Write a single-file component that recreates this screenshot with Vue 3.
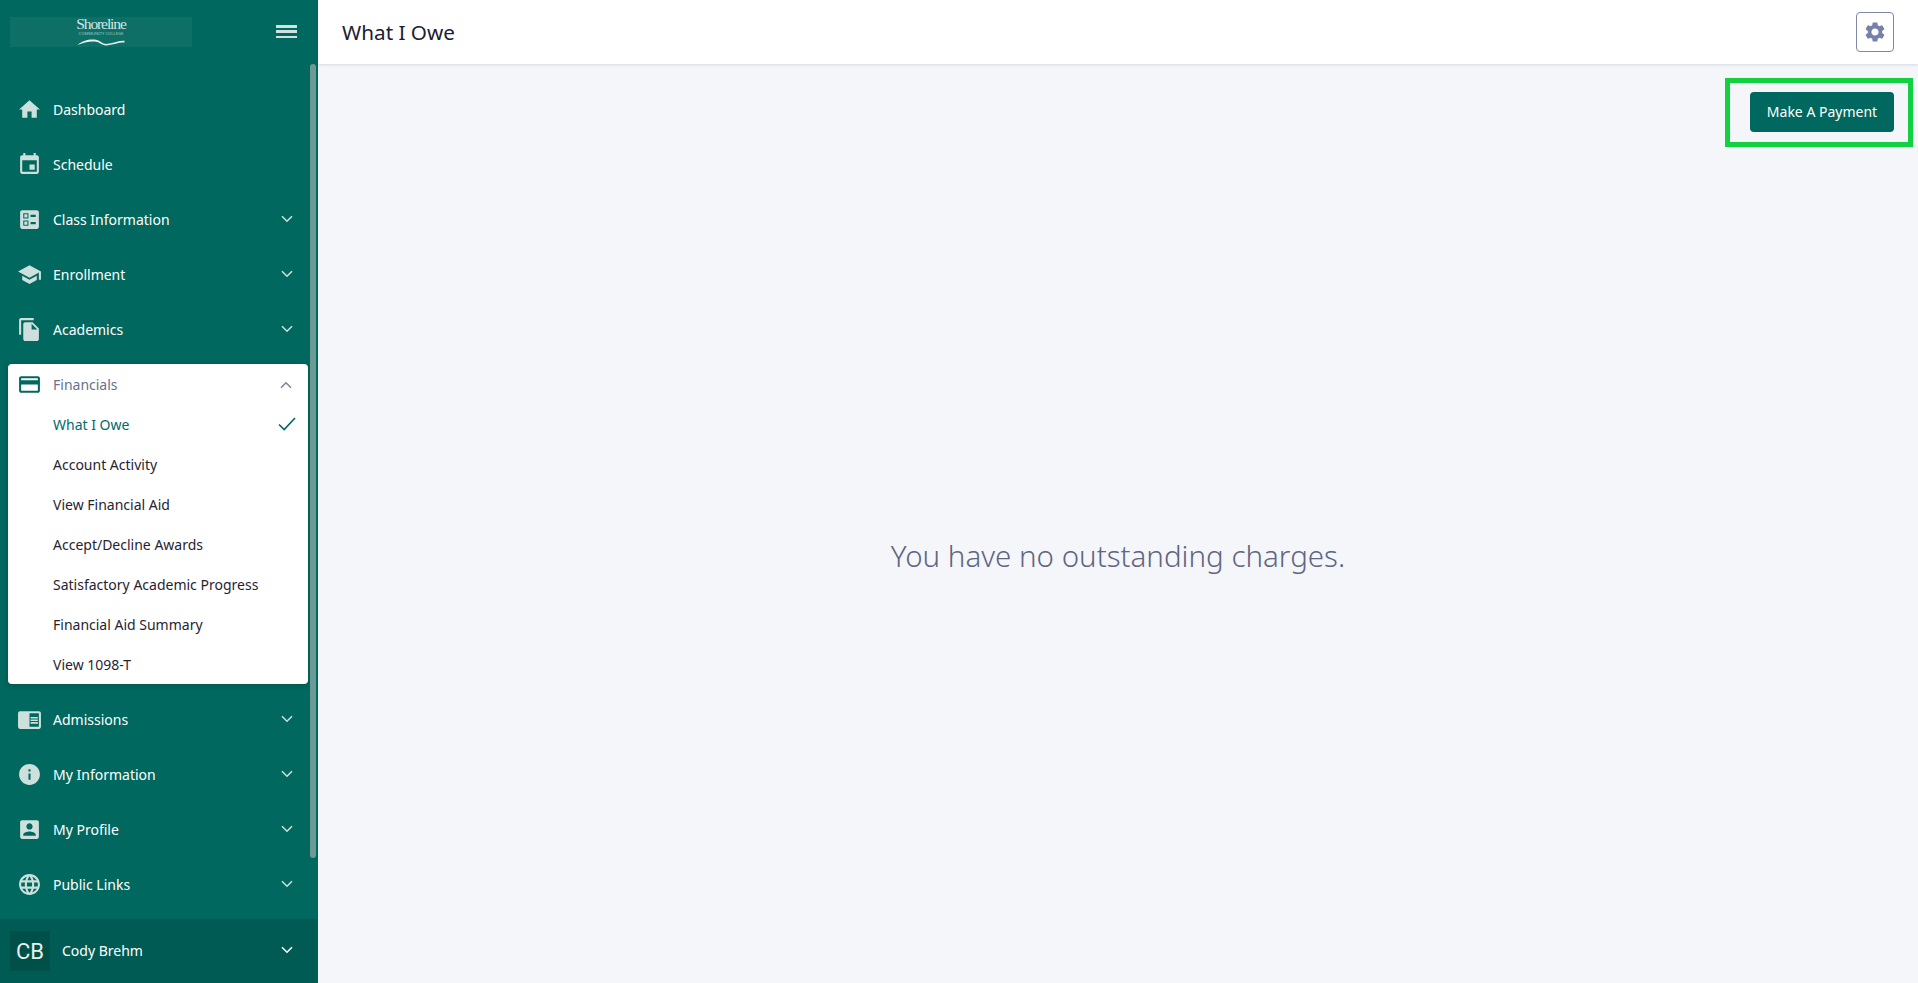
<script setup>
const icons = {
  home: 'M10 20v-6h4v6h5v-8h3L12 3 2 12h3v8z',
  event: 'M17 12h-5v5h5v-5zM16 1v2H8V1H6v2H5c-1.11 0-1.99.9-1.99 2L3 19c0 1.1.89 2 2 2h14c1.1 0 2-.9 2-2V5c0-1.1-.9-2-2-2h-1V1h-2zm3 18H5V8h14v11z',
  ballot: 'M13 9.5h5v-2h-5v2zm0 7h5v-2h-5v2zm6 4.5H5c-1.1 0-2-.9-2-2V5c0-1.1.9-2 2-2h14c1.1 0 2 .9 2 2v14c0 1.1-.9 2-2 2zM6 11h5V6H6v5zm1-4h3v3H7V7zM6 18h5v-5H6v5zm1-4h3v3H7v-3z',
  school: 'M5 13.18v4L12 21l7-3.82v-4L12 17l-7-3.82zM12 3L1 9l11 6 9-4.91V17h2V9L12 3z',
  file: 'M16 1H4c-1.1 0-2 .9-2 2v14h2V3h12V1zm-1 4l6 6v10c0 1.1-.9 2-2 2H7.99C6.89 23 6 22.1 6 21l.01-14c0-1.1.89-2 1.99-2h7zm-1 7h5.5L14 6.5V12z',
  card: 'M20 4H4c-1.11 0-1.99.89-1.99 2L2 18c0 1.11.89 2 2 2h16c1.11 0 2-.89 2-2V6c0-1.11-.89-2-2-2zm0 14H4v-6h16v6zm0-10H4V6h16v2z',
  reader: 'M13 12h7v1.5h-7zm0-2.5h7V11h-7zm0 5h7V16h-7zM21 4H3c-1.1 0-2 .9-2 2v13c0 1.1.9 2 2 2h18c1.1 0 2-.9 2-2V6c0-1.1-.9-2-2-2zm0 15h-9V6h9v13z',
  info: 'M12 2C6.48 2 2 6.48 2 12s4.48 10 10 10 10-4.48 10-10S17.52 2 12 2zm1 15h-2v-6h2v6zm0-8h-2V7h2v2z',
  profile: 'M3 5v14c0 1.1.89 2 2 2h14c1.1 0 2-.9 2-2V5c0-1.1-.9-2-2-2H5c-1.11 0-2 .9-2 2zm12 4c0 1.66-1.34 3-3 3s-3-1.34-3-3 1.34-3 3-3 3 1.34 3 3zm-9 8c0-2 4-3.1 6-3.1s6 1.1 6 3.1v1H6v-1z',
  globe: 'M11.99 2C6.47 2 2 6.48 2 12s4.47 10 9.99 10C17.52 22 22 17.52 22 12S17.52 2 11.99 2zm6.93 6h-2.95c-.32-1.25-.78-2.45-1.38-3.56 1.84.63 3.37 1.91 4.33 3.56zM12 4.04c.83 1.2 1.48 2.53 1.91 3.96h-3.82c.43-1.43 1.08-2.76 1.91-3.96zM4.26 14C4.1 13.36 4 12.69 4 12s.1-1.36.26-2h3.38c-.08.66-.14 1.32-.14 2 0 .68.06 1.34.14 2H4.26zm.82 2h2.95c.32 1.25.78 2.45 1.38 3.56-1.84-.63-3.37-1.9-4.33-3.56zm2.95-8H5.08c.96-1.66 2.49-2.93 4.33-3.56C8.81 5.55 8.35 6.75 8.03 8zM12 19.96c-.83-1.2-1.48-2.53-1.91-3.96h3.82c-.43 1.43-1.08 2.76-1.91 3.96zM14.34 14H9.66c-.09-.66-.16-1.32-.16-2 0-.68.07-1.35.16-2h4.68c.09.65.16 1.32.16 2 0 .68-.07 1.34-.16 2zm.25 5.56c.6-1.11 1.06-2.31 1.38-3.56h2.95c-.96 1.65-2.49 2.93-4.33 3.56zM16.36 14c.08-.66.14-1.32.14-2 0-.68-.06-1.34-.14-2h3.38c.16.64.26 1.31.26 2s-.1 1.36-.26 2h-3.38z',
  gear: 'M19.14 12.94c.04-.3.06-.61.06-.94 0-.32-.02-.64-.07-.94l2.03-1.58c.18-.14.23-.41.12-.61l-1.92-3.32c-.12-.22-.37-.29-.59-.22l-2.39.96c-.5-.38-1.03-.7-1.62-.94l-.36-2.54c-.04-.24-.24-.41-.48-.41h-3.84c-.24 0-.43.17-.47.41l-.36 2.54c-.59.24-1.13.57-1.62.94l-2.39-.96c-.22-.08-.47 0-.59.22L2.74 8.87c-.12.21-.08.47.12.61l2.03 1.58c-.05.3-.09.63-.09.94s.02.64.07.94l-2.03 1.58c-.18.14-.23.41-.12.61l1.92 3.32c.12.22.37.29.59.22l2.39-.96c.5.38 1.03.7 1.62.94l.36 2.54c.05.24.24.41.48.41h3.84c.24 0 .44-.17.47-.41l.36-2.54c.59-.24 1.13-.56 1.62-.94l2.39.96c.22.08.47 0 .59-.22l1.92-3.32c.12-.22.07-.47-.12-.61l-2.01-1.58zM12 15.6c-1.98 0-3.6-1.62-3.6-3.6s1.62-3.6 3.6-3.6 3.6 1.62 3.6 3.6-1.62 3.6-3.6 3.6z'
}
const topItems = [
  { label: 'Dashboard', icon: 'home' },
  { label: 'Schedule', icon: 'event' },
  { label: 'Class Information', icon: 'ballot', more: true },
  { label: 'Enrollment', icon: 'school', more: true },
  { label: 'Academics', icon: 'file', more: true }
]
const subItems = ['Account Activity', 'View Financial Aid', 'Accept/Decline Awards', 'Satisfactory Academic Progress', 'Financial Aid Summary', 'View 1098-T']
const bottomItems = [
  { label: 'Admissions', icon: 'reader', more: true },
  { label: 'My Information', icon: 'info', more: true },
  { label: 'My Profile', icon: 'profile', more: true },
  { label: 'Public Links', icon: 'globe', more: true }
]
</script>

<template>
  <div class="app">
    <aside class="sidebar">
      <div class="brand">
        <div class="logo">
          <span class="logo-name">Shoreline</span>
          <span class="logo-sub">COMMUNITY COLLEGE</span>
          <svg class="logo-wave" viewBox="0 0 48 9"><path d="M0.500 8C5 3.500 14 1.500 20 3C25 4.500 25 7.500 31 6.800C37 6 42 3.500 47.500 3.800V5.500C42 5 37 7.500 31 8.300C24 9 24 5.500 19 4.800C13 4 6 6 0.500 8Z" /></svg>
        </div>
        <button class="burger" aria-label="Menu"><i></i><i></i><i></i></button>
      </div>

      <nav class="nav">
        <a v-for="item in topItems" :key="item.label" class="row">
          <svg class="icon" viewBox="0 0 24 24"><path :d="icons[item.icon]" /></svg>
          <span class="label">{{ item.label }}</span>
          <svg v-if="item.more" class="chev" viewBox="0 0 12 8"><path d="M1 1.200 6 6.200 11 1.200" /></svg>
        </a>

        <section class="open">
          <div class="open-head">
            <svg class="icon" viewBox="0 0 24 24"><path :d="icons.card" /></svg>
            <span class="label">Financials</span>
            <svg class="chev" viewBox="0 0 12 8"><path d="M1 6.800 6 1.800 11 6.800" /></svg>
          </div>
          <a class="sub current">
            <span>What I Owe</span>
            <svg class="check" viewBox="0 0 18 14"><path d="M1 7.500 6.200 12.500 17 1" /></svg>
          </a>
          <a v-for="s in subItems" :key="s" class="sub">{{ s }}</a>
        </section>

        <a v-for="item in bottomItems" :key="item.label" class="row">
          <svg class="icon" viewBox="0 0 24 24"><path :d="icons[item.icon]" /></svg>
          <span class="label">{{ item.label }}</span>
          <svg class="chev" viewBox="0 0 12 8"><path d="M1 1.200 6 6.200 11 1.200" /></svg>
        </a>
      </nav>

      <div class="user">
        <div class="avatar">CB</div>
        <span class="user-name">Cody Brehm</span>
        <svg class="chev user-chev" viewBox="0 0 12 8"><path d="M1 1.200 6 6.200 11 1.200" /></svg>
      </div>
      <div class="thumb"></div>
    </aside>

    <main class="main">
      <header class="header">
        <h1>What I Owe</h1>
        <button class="gear" aria-label="Settings">
          <svg viewBox="0 0 24 24"><path :d="icons.gear" /></svg>
        </button>
      </header>
      <div class="content">
        <div class="actions">
          <div class="highlight"><button class="pay">Make A Payment</button></div>
        </div>
        <p class="empty">You have no outstanding charges.</p>
      </div>
    </main>
  </div>
</template>

<style>
html, body { margin: 0; overflow: hidden; }
</style>

<style scoped>
.app {
  display: flex;
  width: 1918px;
  height: 983px;
  overflow: hidden;
  font-family: "Noto Sans", "Liberation Sans", sans-serif;
  font-size: 14px;
  background: #f4f6fa;
}
.sidebar {
  position: relative;
  flex: 0 0 318px;
  display: flex;
  flex-direction: column;
  background: #00685e;
  color: #fff;
}
.brand {
  height: 64px;
  flex: none;
  box-sizing: border-box;
  display: flex;
  align-items: flex-start;
  padding: 17px 0 0 10px;
}
.logo {
  width: 182px;
  height: 30px;
  background: rgba(255, 255, 255, 0.05);
  display: flex;
  flex-direction: column;
  align-items: center;
  color: #d5e6e2;
}
.logo-name {
  font-family: "Liberation Serif", serif;
  font-size: 15.500px;
  line-height: 13px;
  letter-spacing: -1.100px;
}
.logo-sub {
  font-size: 4.200px;
  line-height: 4px;
  margin-top: 2px;
  white-space: nowrap;
  opacity: 0.7;
}
.logo-wave {
  width: 48px;
  height: 9px;
  margin-top: 1px;
  flex: none;
  fill: #e6f0ee;
}
.burger {
  margin: 8px 0 0 84px;
  padding: 0;
  width: 21px;
  height: 13px;
  background: none;
  border: 0;
  display: flex;
  flex-direction: column;
  justify-content: space-between;
}
.burger i {
  display: block;
  height: 2.500px;
  background: #cfe2de;
}
.nav {
  flex: 1;
  padding-top: 17.500px;
  min-height: 0;
}
.row {
  height: 55px;
  display: flex;
  align-items: center;
  padding: 0 25px 0 16.500px;
}
.icon {
  width: 25px;
  height: 25px;
  flex: none;
  fill: #cde0dd;
}
.label {
  flex: 1;
  margin-left: 11.500px;
  color: #fff;
  white-space: nowrap;
}
.chev {
  width: 12px;
  height: 8px;
  flex: none;
  fill: none;
  stroke: #cde0dd;
  stroke-width: 1.600;
}
.open {
  box-sizing: border-box;
  width: 300px;
  height: 320px;
  margin: 7.500px 0 7.500px 8px;
  background: #fff;
  border-radius: 4px;
  box-shadow: 0 1px 6px rgba(0, 0, 0, 0.2);
}
.open-head {
  height: 41px;
  display: flex;
  align-items: center;
  padding: 0 16px 0 8.500px;
}
.open-head .icon { fill: #00685e; }
.open-head .label { color: #667191; }
.open-head .chev { stroke: #7c86a0; }
.sub {
  height: 40px;
  display: flex;
  align-items: center;
  justify-content: space-between;
  padding: 0 12px 0 45px;
  color: #1f2433;
  white-space: nowrap;
}
.current { color: #006a6c; margin-top: -1px; }
.check {
  width: 18px;
  height: 14px;
  fill: none;
  stroke: #00685e;
  stroke-width: 1.600;
}
.user {
  flex: 0 0 64px;
  display: flex;
  align-items: center;
  padding: 0 25px 0 10px;
  background: #005b54;
}
.avatar {
  width: 40px;
  height: 40px;
  display: flex;
  align-items: center;
  justify-content: center;
  background: #00504a;
  color: #e6f0ee;
  font-family: Roboto, "Liberation Sans", sans-serif;
  font-size: 22px;
}
.user-name {
  flex: 1;
  margin-left: 12px;
  padding-bottom: 2px;
}
.user-chev { stroke: #fff; margin-bottom: 2px; }
.thumb {
  position: absolute;
  left: 310px;
  top: 64px;
  width: 6px;
  height: 794px;
  border-radius: 3px;
  background: #6c9a94;
}
.main {
  flex: 1;
  min-width: 0;
  display: flex;
  flex-direction: column;
}
.header {
  height: 64px;
  flex: none;
  box-sizing: border-box;
  display: flex;
  align-items: center;
  justify-content: space-between;
  padding: 0 24px;
  background: #fff;
  box-shadow: 0 1px 3px rgba(30, 40, 70, 0.14);
  position: relative;
}
.header h1 {
  margin: 0;
  font-size: 20.700px;
  font-weight: 400;
  color: #1c2030;
}
.gear {
  width: 38px;
  height: 40px;
  padding: 0;
  background: #fff;
  border: 1px solid #7f88a6;
  border-radius: 4px;
  display: flex;
  align-items: center;
  justify-content: center;
}
.gear svg {
  width: 24px;
  height: 24px;
  fill: #7880aa;
}
.content {
  flex: 1;
  position: relative;
  display: flex;
  flex-direction: column;
}
.actions {
  display: flex;
  justify-content: flex-end;
  padding: 14px 5px 0 0;
}
.highlight {
  box-sizing: border-box;
  width: 188px;
  height: 69px;
  border: 5px solid #11d142;
  padding: 9px 14px 0 20px;
}
.pay {
  width: 144px;
  height: 40px;
  padding: 0 0 2px;
  border: 0;
  border-radius: 4px;
  background: #00685e;
  color: #fff;
  font: inherit;
  white-space: nowrap;
}
.empty {
  margin: 0;
  text-align: center;
  margin-top: 388px;
  font-size: 29.500px;
  line-height: 42px;
  font-weight: 300;
  color: #5f6582;
}
</style>
